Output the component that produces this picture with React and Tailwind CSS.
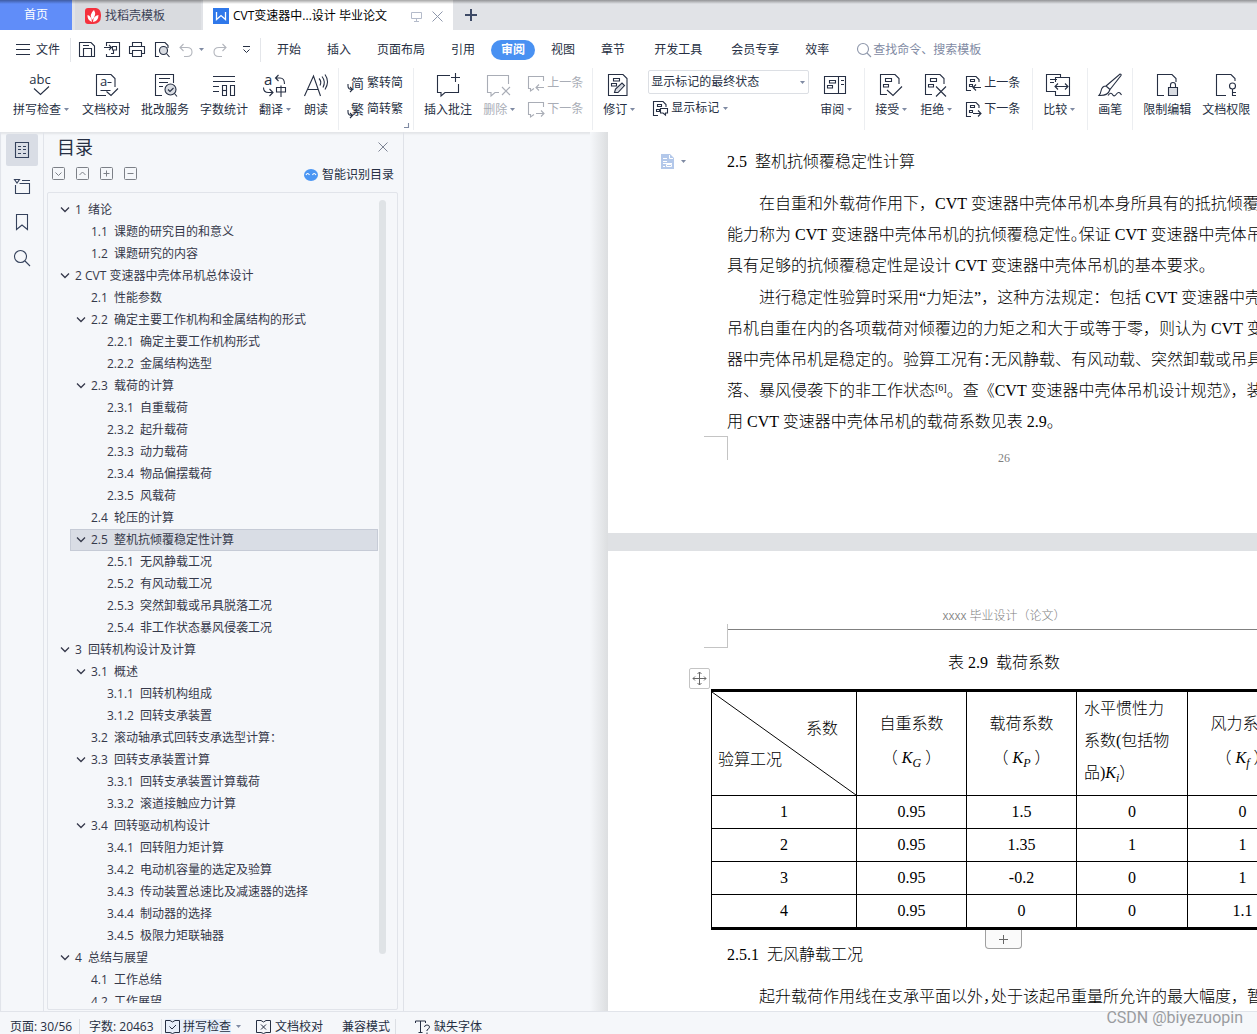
import { useState } from 'react';

const toc = [
  [1, '1  绪论', true],
  [2, '1.1  课题的研究目的和意义'],
  [2, '1.2  课题研究的内容'],
  [1, '2 CVT 变速器中壳体吊机总体设计', true],
  [2, '2.1  性能参数'],
  [2, '2.2  确定主要工作机构和金属结构的形式', true],
  [3, '2.2.1  确定主要工作机构形式'],
  [3, '2.2.2  金属结构选型'],
  [2, '2.3  载荷的计算', true],
  [3, '2.3.1  自重载荷'],
  [3, '2.3.2  起升载荷'],
  [3, '2.3.3  动力载荷'],
  [3, '2.3.4  物品偏摆载荷'],
  [3, '2.3.5  风载荷'],
  [2, '2.4  轮压的计算'],
  [2, '2.5  整机抗倾覆稳定性计算', true],
  [3, '2.5.1  无风静载工况'],
  [3, '2.5.2  有风动载工况'],
  [3, '2.5.3  突然卸载或吊具脱落工况'],
  [3, '2.5.4  非工作状态暴风侵袭工况'],
  [1, '3  回转机构设计及计算', true],
  [2, '3.1  概述', true],
  [3, '3.1.1  回转机构组成'],
  [3, '3.1.2  回转支承装置'],
  [2, '3.2  滚动轴承式回转支承选型计算：'],
  [2, '3.3  回转支承装置计算', true],
  [3, '3.3.1  回转支承装置计算载荷'],
  [3, '3.3.2  滚道接触应力计算'],
  [2, '3.4  回转驱动机构设计', true],
  [3, '3.4.1  回转阻力矩计算'],
  [3, '3.4.2  电动机容量的选定及验算'],
  [3, '3.4.3  传动装置总速比及减速器的选择'],
  [3, '3.4.4  制动器的选择'],
  [3, '3.4.5  极限力矩联轴器'],
  [1, '4  总结与展望', true],
  [2, '4.1  工作总结'],
  [2, '4.2  工作展望'],
];

const indent = { 1: '-ml-2.5 pl-0', 2: 'pl-1.5', 3: 'pl-[22px]' };

const rows = [
  ['1', '0.95', '1.5', '0', '0'],
  ['2', '0.95', '1.35', '1', '1'],
  ['3', '0.95', '-0.2', '0', '1'],
  ['4', '0.95', '0', '0', '1.1'],
];

const Svg = ({ w = 24, h = 24, className = '', children }) => (
  <svg
    width={w}
    height={h}
    viewBox={`0 0 ${w} ${h}`}
    fill="none"
    stroke="currentColor"
    strokeWidth="1.1"
    aria-hidden="true"
    className={`shrink-0 overflow-visible ${className}`}
  >
    {children}
  </svg>
);

const Caret = ({ className = '' }) => (
  <svg width="5" height="3" viewBox="0 0 5 3" aria-hidden="true" className={`shrink-0 ${className}`}>
    <path d="M0 0h5L2.5 3z" fill="#7f8aa3" />
  </svg>
);

// Revised page outline, shared by most of the review icons
const PageLines = () => (
  <>
    <path d="M9 21.5H2.5v-20H17l4 4V11" />
    <path d="M7.500 5.5h6v3h-6zM5.500 11.5h5v2.500h-5z" />
  </>
);

const SmallPage = () => (
  <>
    <path d="M6 15.500H1.500v-14H11l3 3V7" />
    <path d="M5.500 4.500h4v2h-4zM4.500 9.500h3v2h-3z" />
  </>
);

const icons = {
  spell: (
    <Svg>
      <text x="12" y="11" textAnchor="middle" fontSize="13" fill="currentColor" stroke="none">abc</text>
      <path d="M6 15.500l6.500 6 8.500-8" />
    </Svg>
  ),
  proof: (
    <Svg>
      <path d="M12 22.500H2.500v-21H17l4 4V14" />
      <path d="M6.500 17.500h10M13.500 9.500h4M12.500 18.500l4.500 4 7-7" />
      <text x="6" y="13" fontSize="13" fill="currentColor" stroke="none">a</text>
    </Svg>
  ),
  service: (
    <Svg>
      <path d="M9 22.500H2.500v-21h18V10M6 5.500h11M6 9.500h9M6 13.500h4" />
      <circle cx="17.500" cy="16.500" r="5.500" fill="#d9dce2" />
      <path d="M15 16.500l2 2 3.500-3.500M21.500 20.500l2.500 3" />
    </Svg>
  ),
  count: (
    <Svg>
      <path d="M1 3.500h22M1 8.500h22M1 13.500h6M1 18.500h6M10.500 12.500h4v10h-4zM18.500 12.500h4v10h-4z" />
      <path d="M10.500 17.500h4" />
    </Svg>
  ),
  translate: (
    <Svg>
      <text x="2" y="12" fontSize="15" fill="currentColor" stroke="none">a</text>
      <path d="M16.500 2l-3 3 3 3M13.500 5H18q4.500 0 4.500 6M1.500 14.500q0 5 5 5h4M7.500 16l3.500 3.500-3.500 3.500" />
      <path d="M14.500 14.500h9v4.500h-9zM19 12.500V24" />
    </Svg>
  ),
  read: (
    <Svg>
      <path d="M.500 23L9.500 3l7 20M4 16.500h10.500M15 5.500q3 3 1 7M18 3.500q4 5 1 11M21 1.500q5 7 0 15" />
    </Svg>
  ),
  comment: (
    <Svg>
      <path d="M14 2.500H1.500v17H5V23l4-3.500h13.500V11M19.500 0v9M15 4.500h9" />
    </Svg>
  ),
  remove: (
    <Svg>
      <path d="M22.500 11V2.500h-21v17H5V23l4-3.500h4M16 14l8 8M24 14l-8 8" />
    </Svg>
  ),
  revise: (
    <Svg>
      <path d="M2.500 1.500H17l4 4v17H2.500z" />
      <path d="M7.500 5.500h6v2.500h-6zM5.500 10.500h5V13h-5z" />
      <path d="M8.500 19.500l1-3.500 6.500-6 2.500 2.500-6.500 7z" fill="#d9dce2" />
    </Svg>
  ),
  pane: (
    <Svg>
      <path d="M1.500 3.500h21v17h-21zM15.500 3.500v17M18 7.500h3M18 11.500h3M6.500 7.500h6v2.500h-6zM4.500 12.500h5V15h-5z" />
    </Svg>
  ),
  accept: (
    <Svg>
      <PageLines />
      <path d="M9 17l6 5.500 9-9" />
    </Svg>
  ),
  reject: (
    <Svg>
      <PageLines />
      <path d="M13 13.500l10 10M23 13.500l-10 10" />
    </Svg>
  ),
  compare: (
    <Svg>
      <path d="M9 18.500H.500v-17h14v3M4 6.500h7M4 9.500h4M9.500 9V4.500h14v18h-14V18M9 13.500h13M12 10.500l-3 3 3 3M19 10.500l3 3-3 3" />
    </Svg>
  ),
  pen: (
    <Svg>
      <path d="M8 13L22 1q1.500 0 1 1.500L12 16.500zM8 13q-4 0-5 5-.500 3-2 4.500 9 .500 11-6z" />
      <path d="M10 22.500q3-4 4.500-1t4-.500 5 1" />
    </Svg>
  ),
  lock: (
    <Svg>
      <path d="M9 22.500H2.500v-21H17l4 4V9" />
      <path d="M13.500 14.500h9v8h-9z" fill="#d9dce2" />
      <path d="M15.500 14.500V12q0-2.500 2.500-2.500t2.500 2.500v2.500" />
    </Svg>
  ),
  key: (
    <Svg>
      <path d="M12 22.500H2.500v-21H17l4 4V8" />
      <circle cx="18.500" cy="13" r="3" />
      <path d="M18.500 16v7M18.500 22.500H22M18.500 19.500H22" />
    </Svg>
  ),
};

const Tool = ({ icon, label, caret, disabled }) => (
  <button
    type="button"
    disabled={disabled}
    className={`flex shrink-0 flex-col whitespace-nowrap ${disabled ? 'text-[#a9adb6]' : 'text-[#262f43]'}`}
  >
    <span className={`flex w-full justify-center ${caret ? 'pr-1' : ''}`}>{icons[icon]}</span>
    <span className="mt-[3px] flex h-5 items-center">
      {label}
      {caret && <span className="flex w-2.5 justify-center pb-0.5"><Caret /></span>}
    </span>
  </button>
);

const SmallTool = ({ icon, label, caret, disabled }) => (
  <button
    type="button"
    disabled={disabled}
    className={`flex h-6 shrink-0 items-center whitespace-nowrap ${disabled ? 'text-[#a9adb6]' : 'text-[#262f43]'}`}
  >
    {icon}
    <span className="ml-[3px]">{label}</span>
    {caret && <Caret className="ml-1" />}
  </button>
);

const Group = ({ className = '', children }) => (
  <div className={`relative flex h-[62px] shrink-0 gap-[11px] border-r border-[#eceef1] ${className}`}>{children}</div>
);

const Pair = ({ className = '', children }) => <div className={`flex flex-col gap-0.5 ${className}`}>{children}</div>;

const Cjk = ({ children }) => (
  <Svg w={17} h={17}>
    <text x="4" y="13" fontSize="13" fill="currentColor" stroke="none">{children}</text>
    <path d="M1 9v2q0 3.500 4 3.500M3 12l2.500 2.500L3 17" />
  </Svg>
);

const bubble = (arrow) => (
  <Svg w={16} h={16}>
    <path d="M15.500 6V1.500H.500v12h2V16L6 13.500" />
    <path d={arrow} />
  </Svg>
);
const LEFT = 'M16 12.500H8M11 9.500l-3 3 3 3';
const RIGHT = 'M8 12.500h8M13 9.500l3 3-3 3';

const small = (arrow) => (
  <Svg w={16} h={16}>
    <SmallPage />
    <path d={arrow} />
  </Svg>
);

const TitleBar = () => (
  <div className="relative flex h-[30px] shrink-0 bg-[#e1e3e7] before:absolute before:inset-x-0 before:top-0 before:h-1 before:bg-linear-to-b before:from-black/35 before:to-transparent">
    <button type="button" className="w-[72px] bg-[#608df9] text-white">首页</button>
    <button type="button" className="ml-[3px] flex w-[126px] items-center gap-1 bg-[#d9dbdf] pt-0.5 pl-2.5 text-[#3c4257]">
      <svg width="16" height="16" viewBox="0 0 16 16" aria-hidden="true">
        <path d="M3 0h8q5 1 5 7v1q0 8-8 8H3q-3 0-3-3V3q0-3 3-3z" fill="#f5313d" />
        <path d="M7 14Q2 12 2.500 7q4 1 4.500 7zM7 12Q4 6 9 2q3 5-2 10zM8 14q0-6 5.500-7 0 6-5.500 7z" fill="#fff" />
      </svg>
      找稻壳模板
    </button>
    <div className="ml-0.5 flex w-[250px] items-center bg-white pt-0.5 pl-2.5">
      <svg width="16" height="16" viewBox="0 0 16 16" aria-hidden="true">
        <path d="M0 0h16v16H0z" fill="#2f78ea" />
        <path d="M3.500 4v7.500L8 7.500l4.500 4V4" fill="none" stroke="#fff" strokeWidth="1.300" />
      </svg>
      <span className="ml-1 w-[170px] whitespace-nowrap text-black">CVT变速器中...设计 毕业论文</span>
      <button type="button" aria-label="演示" className="ml-2 text-[#b4bbca]">
        <Svg w={11} h={11}><path d="M.500 1.500h10v6H.500zM5.500 7.500v3M3 10.500h5" strokeWidth="1" /></Svg>
      </button>
      <button type="button" aria-label="关闭标签" className="ml-2.5 text-[#8e97ab]">
        <Svg w={11} h={11}><path d="M.500.500l10 10M10.500.500l-10 10" strokeWidth="1" /></Svg>
      </button>
    </div>
    <button type="button" aria-label="新建标签" className="ml-3 text-[#3d4a66]">
      <Svg w={12} h={12}><path d="M6 0v12M0 6h12" strokeWidth="2" /></Svg>
    </button>
  </div>
);

const MenuBar = () => {
  const [active, setActive] = useState('审阅');
  return (
    <div className="flex h-[38px] shrink-0 items-center pt-px whitespace-nowrap">
      <button type="button" className="flex items-center gap-1.5 pl-4">
        <Svg w={14} h={11}><path d="M0 .500h14M0 5.500h14M0 10.500h14" strokeWidth="1" /></Svg>
        文件
      </button>
      <div className="ml-2.5 h-6 w-px bg-[#e4e6ea]" />
      <div className="flex w-[189px] items-center gap-[9px] pl-2">
        <button type="button" aria-label="保存"><Svg w={16} h={16}><path d="M.500.500H12l3.500 3.500v10.500H.500zM4.500 14.500v-8h8v8M4 3.500h6" /></Svg></button>
        <button type="button" aria-label="输出为PDF"><Svg w={16} h={16}><path d="M2.500 4V.500h13v14h-13V12M0 5.500h7M5 3l2.500 2.500L5 8M8.500 4.500h4V8h-4zM9.500 8v3.500H7" /></Svg></button>
        <button type="button" aria-label="打印"><Svg w={16} h={16}><path d="M3.500 4V.500h9V4M3.500 11.500h-3v-7h15v7h-3M3.500 8.500h9v6h-9z" /></Svg></button>
        <button type="button" aria-label="打印预览"><Svg w={16} h={16}><path d="M5 14.500H1.500V.500H11l3 3V6" /><circle cx="9.500" cy="8.500" r="4" fill="#d9dce2" /><path d="M12.500 11.500l3 3.500" /></Svg></button>
        <button type="button" aria-label="撤销" className="flex items-center gap-1.5 text-[#b3b6bd]"><Svg w={14} h={14}><path d="M4.500 1L1 4.500 4.500 8M1 4.500h7q5 0 5 4.500t-5 4.500H5" /></Svg><Caret /></button>
        <button type="button" aria-label="恢复" className="text-[#b3b6bd]"><Svg w={14} h={14}><path d="M9.500 1L13 4.500 9.500 8M13 4.500H6q-5 0-5 4.500t5 4.500h3" /></Svg></button>
        <button type="button" aria-label="更多命令" className="ml-1.5"><Svg w={9} h={8}><path d="M1 .500h7M1.500 3.500l3 3 3-3" strokeWidth="1" /></Svg></button>
      </div>
      <div className="mr-[3px] h-6 w-px bg-[#e4e6ea]" />
      {['开始', '插入', '页面布局', '引用', '审阅', '视图', '章节', '开发工具', '会员专享', '效率'].map((name) => (
        <button
          key={name}
          type="button"
          onClick={() => setActive(name)}
          className={
            active === name
              ? 'mx-[3px] h-5 rounded-full bg-[#4991f2] px-2.5 font-bold text-white'
              : `h-5 px-[13px] text-[#262f43] ${name === '开发工具' || name === '会员专享' ? 'ml-[3px]' : ''}`
          }
        >
          {name}
        </button>
      ))}
      <label className="ml-[15px] flex items-center gap-0.5 text-[#8e97ab]">
        <Svg w={14} h={14}><circle cx="6" cy="6" r="5.500" /><path d="M10 10l4 4" /></Svg>
        <input type="text" aria-label="查找" placeholder="查找命令、搜索模板" className="w-40 placeholder:text-[#7f8aa3] outline-none" />
      </label>
    </div>
  );
};

const Ribbon = () => (
  <div className="flex h-16 shrink-0 items-start overflow-hidden">
    <Group className="pt-[5px] pr-2.5 pl-[13px]">
      <Tool icon="spell" label="拼写检查" caret />
      <Tool icon="proof" label="文档校对" />
      <Tool icon="service" label="批改服务" />
      <Tool icon="count" label="字数统计" />
      <Tool icon="translate" label="翻译" caret />
      <Tool icon="read" label="朗读" />
    </Group>
    <Group className="pt-[3px] pr-2.5 pl-2">
      <Pair>
        <SmallTool icon={<Cjk>简</Cjk>} label="繁转简" />
        <SmallTool icon={<Cjk>繁</Cjk>} label="简转繁" />
      </Pair>
      <Svg w={5} h={5} className="absolute right-1 bottom-0.5 text-[#7f8aa3]"><path d="M0 4.500h4.500V0" /></Svg>
    </Group>
    <Group className="pt-[5px] pr-[9px] pl-2.5">
      <Tool icon="comment" label="插入批注" />
      <Tool icon="remove" label="删除" caret disabled />
      <Pair className="-mt-0.5">
        <SmallTool icon={bubble(LEFT)} label="上一条" disabled />
        <SmallTool icon={bubble(RIGHT)} label="下一条" disabled />
      </Pair>
    </Group>
    <Group className="px-2.5 pt-[5px]">
      <Tool icon="revise" label="修订" caret />
      <Pair className="-mt-[3px] items-start">
        <div className="relative flex items-center">
          <select aria-label="显示以供审阅" className="h-6 w-[161px] appearance-none rounded-xs border border-[#dcdfe4] bg-white pl-0.5 text-[#262f43]">
            <option>显示标记的最终状态</option>
          </select>
          <Caret className="pointer-events-none absolute right-1" />
        </div>
        <div className="pl-1">
          <SmallTool
            icon={<Svg w={16} h={16}><SmallPage /><path d="M8.500 8.500h7v4.500h-2v2l-2.500-2H8.500z" fill="#fff" /></Svg>}
            label="显示标记"
            caret
          />
        </div>
      </Pair>
      <Tool icon="pane" label="审阅" caret />
    </Group>
    <Group className="pt-[5px] pr-3 pl-2.5">
      <Tool icon="accept" label="接受" caret />
      <Tool icon="reject" label="拒绝" caret />
      <Pair className="-mt-0.5">
        <SmallTool icon={small(LEFT)} label="上一条" />
        <SmallTool icon={small(RIGHT)} label="下一条" />
      </Pair>
    </Group>
    <Group className="px-2.5 pt-[5px]">
      <Tool icon="compare" label="比较" caret />
    </Group>
    <Group className="px-2.5 pt-[5px]">
      <Tool icon="pen" label="画笔" />
    </Group>
    <div className="flex gap-[11px] px-2.5 pt-[5px]">
      <Tool icon="lock" label="限制编辑" />
      <Tool icon="key" label="文档权限" />
    </div>
  </div>
);

const Rail = () => (
  <nav className="flex w-11 shrink-0 flex-col items-center gap-1 border-x border-[#e1e4ea] pt-0.5 text-[#35425c]">
    <button type="button" aria-label="目录" className="flex size-8 items-center justify-center rounded-xs bg-[#d9dde5]">
      <Svg w={16} h={18}><path d="M1.500 1.500h13v15h-13zM4 5.500h3M9 5.500h3M4 8.500h3M9 8.500h3M4 12.500h3M9 12.500h3" /></Svg>
    </button>
    <button type="button" aria-label="章节" className="flex size-8 items-center justify-center">
      <Svg w={16} h={16}><path d="M.500 1.500h5L3 5zM8 2.500h8M1.500 7v8.500h14v-10H5.500" /></Svg>
    </button>
    <button type="button" aria-label="书签" className="flex size-8 items-center justify-center">
      <Svg w={12} h={16}><path d="M.500.500h11v15L6 11 .500 15.500z" /></Svg>
    </button>
    <button type="button" aria-label="查找" className="flex size-8 items-center justify-center">
      <Svg w={16} h={16}><circle cx="6.500" cy="6.500" r="6" /><path d="M11 11l5 5" /></Svg>
    </button>
  </nav>
);

const Outline = () => {
  const [selected, setSelected] = useState(15);
  return (
    <aside className="flex w-[360px] shrink-0 flex-col border-r border-[#dfe2e8] pr-[5px] pb-px pl-[3px]">
      <div className="flex h-[30px] items-center justify-between pr-2.5 pl-2.5">
        <h2 className="text-lg text-[#262f43]">目录</h2>
        <button type="button" aria-label="关闭" className="text-[#7d8494]">
          <Svg w={10} h={10}><path d="M.500.500l9 9M9.500.500l-9 9" strokeWidth="1" /></Svg>
        </button>
      </div>
      <div className="flex h-[30px] items-start gap-[11px] pt-[5px] pr-1 pl-[5px] text-[#7c8087]">
        {[
          ['展开', 'M3.500 5.500l3 3 3-3'],
          ['收起', 'M3.500 8l3-3 3 3'],
          ['升级', 'M3.500 6.500h6M6.500 3.500v6'],
          ['降级', 'M3.500 6.500h6'],
        ].map(([name, d]) => (
          <button key={name} type="button" aria-label={name}>
            <Svg w={13} h={13}><rect x=".500" y=".500" width="12" height="12" rx="1" strokeWidth="1" /><path d={d} strokeWidth="1" /></Svg>
          </button>
        ))}
        <button type="button" className="ml-auto flex items-center gap-1 text-[#262f43]">
          <svg width="14" height="12" viewBox="0 0 14 12" aria-hidden="true">
            <ellipse cx="7" cy="6" rx="7" ry="6" fill="#4b96f3" />
            <path d="M2 6q1.500-3 3.500 0M8.500 6q1.500-3 3.500 0" stroke="#fff" fill="none" strokeWidth="1.200" />
          </svg>
          智能识别目录
        </button>
      </div>
      <div className="flex min-h-0 flex-1 rounded-xs border border-[#e1e4ea] pt-1.5 pb-1.5 pl-3">
        <ul className="min-h-0 flex-1 overflow-hidden pl-2.5">
          {toc.map(([level, text, open], i) => (
            <li key={text}>
              <button
                type="button"
                onClick={() => setSelected(i)}
                className={`flex h-[22px] w-full items-center whitespace-pre text-[#35394a] ${
                  selected === i ? 'bg-[#d9dde5] outline -outline-offset-1 outline-[#c6cbd6]' : ''
                } ${indent[level]}`}
              >
                <span className="flex w-[15px] shrink-0">
                  {open && <Svg w={10} h={6}><path d="M1 .500l4 4 4-4" strokeWidth="1.300" /></Svg>}
                </span>
                {text}
              </button>
            </li>
          ))}
        </ul>
        <div className="mt-px mr-[11px] mb-[49px] ml-px w-[7px] rounded-full bg-[#dfe3e6]" />
      </div>
    </aside>
  );
};

const K = ({ sub }) => (
  <i className="mx-1">
    K<sub className="relative -bottom-1 align-baseline text-xs">{sub}</sub>
  </i>
);

// 半宽句读
const Half = ({ children }) => <span className="[font-feature-settings:'halt']">{children}</span>;

const Line = ({ first, children }) => <span className={`block ${first ? 'pl-8' : ''}`}>{children}</span>;

const LoadTable = () => (
  <table className="w-[696px] table-fixed border-collapse border-y-3 border-black text-center leading-[31px]">
    <colgroup>
      <col className="w-[145px]" />
      <col className="w-[110px]" />
      <col className="w-[110px]" />
      <col className="w-[111px]" />
      <col className="w-[110px]" />
      <col className="w-[110px]" />
    </colgroup>
    <thead>
      <tr className="h-[105px]">
        <th className="relative border border-black p-0 font-light">
          <svg className="absolute inset-0 size-full" viewBox="0 0 145 106" preserveAspectRatio="none" aria-hidden="true">
            <path d="M0 0l145 106" stroke="#000" strokeWidth="1" />
          </svg>
          <div className="pr-[18px] text-right">系数</div>
          <div className="pl-1.5 text-left">验算工况</div>
        </th>
        <th className="border border-black p-0 pb-1.5 leading-[34px] font-light">自重系数<br /><Half>（</Half><K sub="G" /><Half>）</Half></th>
        <th className="border border-black p-0 pb-1.5 leading-[34px] font-light">载荷系数<br /><Half>（</Half><K sub="P" /><Half>）</Half></th>
        <th className="border border-black p-0 pb-1.5 pl-[7px] text-left leading-[32px] font-light">水平惯性力<br />系数(包括物<br />品)<i>K<sub className="relative -bottom-1 align-baseline text-xs">i</sub></i>）</th>
        <th className="border border-black p-0 pb-1.5 leading-[34px] font-light">风力系数<br /><Half>（</Half><K sub="f" /><Half>）</Half></th>
        <th className="border border-black p-0 font-light" />
      </tr>
    </thead>
    <tbody>
      {rows.map((row) => (
        <tr key={row[0]} className="h-[33px]">
          {row.map((cell, i) => (
            <td key={i} className="border border-black p-0 pb-px">{cell}</td>
          ))}
          <td className="border border-black p-0" />
        </tr>
      ))}
    </tbody>
  </table>
);

const Document = () => (
  <main className="flex min-w-0 flex-1 overflow-hidden pl-[186px]">
    <div className="w-[18px] shrink-0 bg-linear-to-r from-[#f5f7fa] to-[#dcdee0]" />
    <div className="min-w-0 flex-1 overflow-hidden bg-[#dfe1e4] font-['Liberation_Serif','Noto_Sans_CJK_SC',serif] text-base leading-[31px] font-light whitespace-pre text-black">
      <section className="h-[401px] bg-white pt-3.5">
        <div className="flex items-center">
          <button type="button" aria-label="段落布局" className="ml-[53px] flex w-[66px] items-center gap-[7px]">
            <svg width="13" height="15" viewBox="0 0 13 15" aria-hidden="true">
              <path d="M0 0h9l4 4v11H0z" fill="#b3c8ea" />
              <path d="M2 4.500h4M2 7.500h4M2 9.500h9M2 12.500h2M5.500 10.500h5v2h-5zM8.500 1v3.500H12" stroke="#fff" fill="none" />
            </svg>
            <Caret />
          </button>
          <h3>2.5  整机抗倾覆稳定性计算</h3>
        </div>
        <p className="mt-[11px] pl-[119px]">
          <Line first>在自重和外载荷作用下，CVT 变速器中壳体吊机本身所具有的抵抗倾覆</Line>
          <Line>能力称为 CVT 变速器中壳体吊机的抗倾覆稳定性<Half>。</Half>保证 CVT 变速器中壳体吊</Line>
          <Line>具有足够的抗倾覆稳定性是设计 CVT 变速器中壳体吊机的基本要求。</Line>
        </p>
        <p className="mt-px pl-[119px]">
          <Line first>进行稳定性验算时采用“力矩法”，这种方法规定：包括 CVT 变速器中壳</Line>
          <Line>吊机自重在内的各项载荷对倾覆边的力矩之和大于或等于零，则认为 CVT 变</Line>
          <Line>器中壳体吊机是稳定的。验算工况有<Half>：</Half>无风静载、有风动载、突然卸载或吊具</Line>
          <Line>落、暴风侵袭下的非工作状态<sup className="text-[10px]">[6]</sup>。查《CVT 变速器中壳体吊机设计规范》，装</Line>
          <Line>用 CVT 变速器中壳体吊机的载荷系数见表 2.9。</Line>
        </p>
        <div className="-mt-px ml-24 size-6 border-t border-r border-[#c4c4c4]" />
        <div className="-mt-2.5 w-[792px] text-center text-xs text-[#808080]">26</div>
      </section>
      <section className="mt-[18px] h-[600px] bg-white pt-[57px]">
        <div className="w-[792px] text-center text-xs text-[#808080]">
          <span className="font-['Liberation_Mono'] text-[10px]">XXXX</span> 毕业设计（论文）
        </div>
        <div className="flex pl-24">
          <div className="size-6 border-r border-b border-[#c4c4c4]" />
          <div className="mt-[5px] h-px flex-1 bg-[#808080]" />
        </div>
        <div className="-mt-px w-[792px] text-center">表 2.9  载荷系数</div>
        <div className="relative mt-[11px] ml-[103px]">
          <button type="button" aria-label="移动表格" className="absolute -top-[21px] -left-[22px] flex size-[21px] items-center justify-center rounded-xs border border-[#c4c4c4] bg-white text-[#666]">
            <Svg w={15} h={15}><path d="M7.500 1v13M1 7.500h13M5.500 3l2-2 2 2M5.500 12l2 2 2-2M3 5.500l-2 2 2 2M12 5.500l2 2-2 2" strokeWidth="1" /></Svg>
          </button>
          <LoadTable />
          <button type="button" aria-label="添加行" className="absolute top-full left-[274px] flex h-[19px] w-[37px] items-center justify-center rounded-b-sm border border-t-0 border-[#a0a0a0] bg-[#fafafa] text-[#666]">
            <Svg w={9} h={9}><path d="M4.500 0v9M0 4.500h9" strokeWidth="1" /></Svg>
          </button>
        </div>
        <h4 className="mt-[9px] pl-[119px]">2.5.1  无风静载工况</h4>
        <p className="mt-[11px] pl-[119px]">
          <Line first>起升载荷作用线在支承平面以外<Half>，</Half>处于该起吊重量所允许的最大幅度，暂</Line>
        </p>
      </section>
    </div>
  </main>
);

const StatusBar = () => (
  <footer className="relative flex h-[23px] shrink-0 items-center border-t border-[#e1e4ea] bg-[#f5f7fa] pt-[7px] whitespace-nowrap text-[#262f43]">
    <span className="ml-2.5 w-[70px] border-r border-[#dcdfe4]">页面: 30/56</span>
    <span className="ml-[9px] w-[73px] border-r border-[#dcdfe4]">字数: 20463</span>
    <button type="button" className="ml-[3px] flex items-center gap-[3px] bg-[#e8effa]">
      <Svg w={15} h={14}><path d="M5 .500H.500v12H5l2.500 1 2.500-1h4.500V.500H10L7.500 2 5 .500M4.500 6.500l2.500 2.500 4-4" strokeWidth="1" /></Svg>
      拼写检查
    </button>
    <Caret className="ml-[5px]" />
    <button type="button" className="ml-[15px] flex items-center gap-1">
      <Svg w={15} h={14}><path d="M5 .500H.500v12H5l2.500 1 2.500-1h4.500V.500H10L7.500 2 5 .500M5 4.500l5 5M10 4.500l-5 5" strokeWidth="1" /></Svg>
      文档校对
    </button>
    <button type="button" className="ml-[19px] w-[54px] border-r border-[#dcdfe4] text-left">兼容模式</button>
    <button type="button" className="ml-[19px] flex items-center gap-1">
      <Svg w={15} h={14}><path d="M.500 3V1h10v2M5.500 1v11.500M3.500 12.500h4M9.500 7q0-2 2.500-2t2.500 2q0 1.500-2.500 3v1M12 12.500V14" strokeWidth="1" /></Svg>
      缺失字体
    </button>
    <span className="absolute right-3.5 bottom-1 font-[Roboto,sans-serif] text-base text-[#9a9ca0]">CSDN @biyezuopin</span>
  </footer>
);

export default function App() {
  return (
    <div className="flex h-screen flex-col overflow-hidden bg-white font-['Open_Sans','Noto_Sans_CJK_SC',sans-serif] text-xs text-[#262f43]">
      <TitleBar />
      <MenuBar />
      <Ribbon />
      <div className="flex min-h-0 flex-1 bg-[#f5f7fa] shadow-[inset_0_2px_2px_#e3e5e8]">
        <Rail />
        <Outline />
        <Document />
      </div>
      <StatusBar />
    </div>
  );
}
